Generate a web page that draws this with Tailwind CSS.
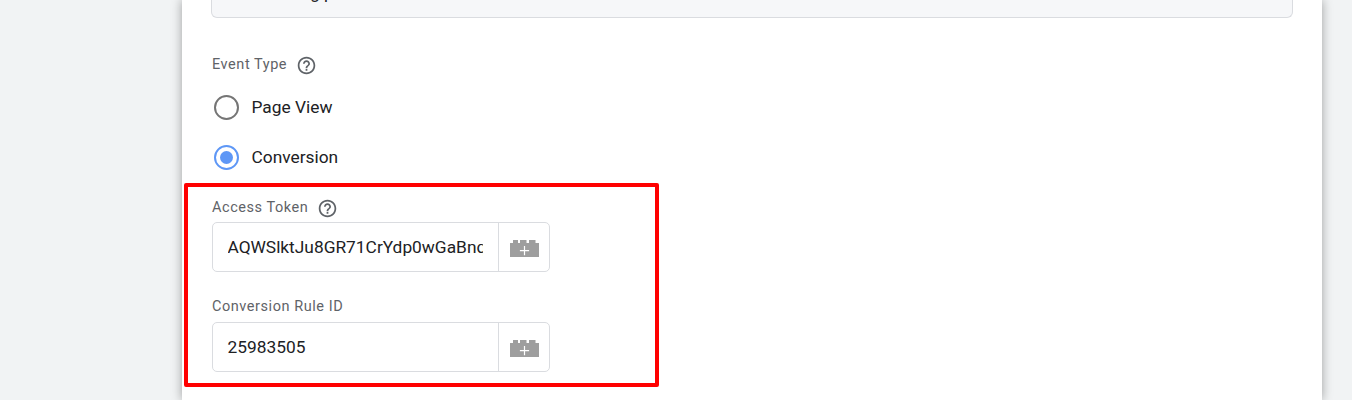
<!DOCTYPE html>
<html lang="en">
<head>
    <meta charset="UTF-8">
    <title>Conversion tag</title>
    <script src="https://cdn.jsdelivr.net/npm/@tailwindcss/browser@4"></script>
</head>
<body class="bg-[#f1f3f4] h-[400px] overflow-hidden font-['Roboto',sans-serif]">
    <div class="relative h-[400px] w-[1140px] ml-[182px] bg-white shadow-[0_0_10px_rgba(0,0,0,0.35)] pl-[29px] pr-[29px]">
        <div class="h-[18px] bg-[#f6f7f9] border border-t-0 border-[#dadce0] rounded-b-[6px] overflow-hidden relative">
            <span class="absolute left-[43px] top-[-17px] text-[17px] leading-[20px] text-[#202124]">Tracking pixel</span>
        </div>

        <div class="flex items-center h-[20px] mt-[37px] ml-[1px] text-[14.5px] tracking-[0.55px] text-[#5f6368]">
            <span>Event Type</span>
            <svg class="ml-[9px] w-[21px] h-[21px]" viewBox="0 0 24 24" fill="#5f6368"><path d="M11 18h2v-2h-2v2zm1-16C6.48 2 2 6.48 2 12s4.48 10 10 10 10-4.48 10-10S17.52 2 12 2zm0 18c-4.41 0-8-3.59-8-8s3.59-8 8-8 8 3.59 8 8-3.59 8-8 8zm0-14c-2.21 0-4 1.79-4 4h2c0-1.1.9-2 2-2s2 .9 2 2c0 2-3 1.75-3 5h2c0-2.25 3-2.5 3-5 0-2.21-1.79-4-4-4z"/></svg>
        </div>

        <div class="flex items-center h-[26px] mt-[19px] ml-[3px]">
            <div class="w-[25px] h-[25px] rounded-full border-2 border-[#757575]"></div>
            <span class="ml-[12.5px] pt-[2px] text-[17.33px] text-[#202124]">Page View</span>
        </div>
        <div class="flex items-center h-[26px] mt-[24px] ml-[3px]">
            <div class="w-[25px] h-[25px] rounded-full border-2 border-[#5e97f6] flex items-center justify-center">
                <div class="w-[13px] h-[13px] rounded-full bg-[#5e97f6]"></div>
            </div>
            <span class="ml-[12.5px] pt-[2px] text-[17.33px] text-[#202124]">Conversion</span>
        </div>

        <div class="flex items-center h-[20px] mt-[28px] ml-[1px] text-[14.5px] tracking-[0.55px] text-[#5f6368]">
            <span>Access Token</span>
            <svg class="ml-[9px] w-[21px] h-[21px]" viewBox="0 0 24 24" fill="#5f6368"><path d="M11 18h2v-2h-2v2zm1-16C6.48 2 2 6.48 2 12s4.48 10 10 10 10-4.48 10-10S17.52 2 12 2zm0 18c-4.41 0-8-3.59-8-8s3.59-8 8-8 8 3.59 8 8-3.59 8-8 8zm0-14c-2.21 0-4 1.79-4 4h2c0-1.1.9-2 2-2s2 .9 2 2c0 2-3 1.75-3 5h2c0-2.25 3-2.5 3-5 0-2.21-1.79-4-4-4z"/></svg>
        </div>
        <div class="flex w-[338px] h-[50px] mt-[4px] ml-[1px] border border-[#dadce0] rounded-[5px]">
            <div class="w-[286px] pl-[14.5px] pr-[15px] pt-[2px] flex items-center border-r border-[#dadce0]">
                <span class="block overflow-hidden whitespace-nowrap text-[17.33px] text-[#202124]">AQWSlktJu8GR71CrYdp0wGaBnqT5xY</span>
            </div>
            <div class="flex-1 flex items-center justify-center pt-[3px]">
                <svg class="w-[29px] h-[17px]" viewBox="0 0 29 17"><path fill="#9e9e9e" d="M0 3h3V0h5v3h2V0h6.5v3h2.5V0h6.5v3H29v14H0z"/><path fill="#fff" d="M13.9 6h1.2v4h4v1.2h-4v4h-1.2v-4h-4V10h4z"/></svg>
            </div>
        </div>

        <div class="flex items-center h-[20px] mt-[25px] ml-[1px] text-[14.5px] tracking-[0.55px] text-[#5f6368]">
            <span>Conversion Rule ID</span>
        </div>
        <div class="flex w-[338px] h-[50px] mt-[5px] ml-[1px] border border-[#dadce0] rounded-[5px]">
            <div class="w-[286px] pl-[14.5px] pr-[15px] pt-[2px] flex items-center border-r border-[#dadce0]">
                <span class="text-[17.33px] text-[#202124]">25983505</span>
            </div>
            <div class="flex-1 flex items-center justify-center pt-[3px]">
                <svg class="w-[29px] h-[17px]" viewBox="0 0 29 17"><path fill="#9e9e9e" d="M0 3h3V0h5v3h2V0h6.5v3h2.5V0h6.5v3H29v14H0z"/><path fill="#fff" d="M13.9 6h1.2v4h4v1.2h-4v4h-1.2v-4h-4V10h4z"/></svg>
            </div>
        </div>

        <div class="absolute left-[2px] top-[183px] w-[475px] h-[204px] border-4 border-[#ff0000] rounded-[2px]"></div>
    </div>
</body>
</html>
